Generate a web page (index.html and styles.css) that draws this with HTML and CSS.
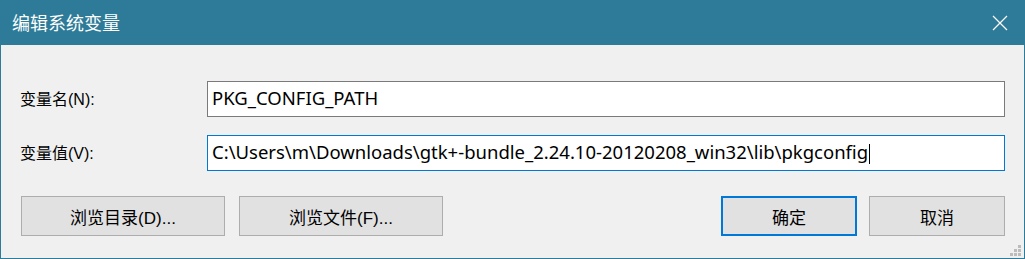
FILE: index.html
```html
<!DOCTYPE html>
<html>
<head>
  <title>编辑系统变量</title>
  <meta charset="utf-8">
  <link rel="stylesheet" href="styles.css">
</head>
<body>
  <div class="window">
    <div class="titlebar">
      <div class="title">编辑系统变量</div>
      <div class="close">
        <svg width="16" height="16" viewBox="0 0 16 16">
          <path d="M1 1 L15 15 M15 1 L1 15" stroke="#ffffff" stroke-width="1.2" fill="none"/>
        </svg>
      </div>
    </div>

    <div class="content">
      <div class="fields">
        <label class="field-label">变量名(N):</label>
        <div class="field-input">PKG_CONFIG_PATH</div>
        <label class="field-label">变量值(V):</label>
        <div class="field-input focused">C:\Users\m\Downloads\gtk+-bundle_2.24.10-20120208_win32\lib\pkgconfig<span class="caret"></span></div>
      </div>

      <div class="actions">
        <div class="action-group">
          <button class="btn wide">浏览目录(D)...</button>
          <button class="btn wide">浏览文件(F)...</button>
        </div>
        <div class="action-group right">
          <button class="btn narrow default">确定</button>
          <button class="btn narrow">取消</button>
        </div>
      </div>
    </div>

    <div class="grip">
      <span></span><span></span><span></span>
      <span></span><span></span><span></span>
    </div>
  </div>
</body>
</html>
```

FILE: styles.css
```css
* {
  margin: 0;
  padding: 0;
  box-sizing: border-box;
}

body {
  width: 1025px;
  height: 259px;
  overflow: hidden;
  font-family: "Liberation Sans", "Noto Sans CJK SC", sans-serif;
  background: #f0f0f0;
  color: #000000;
}

.window {
  position: relative;
  width: 1025px;
  height: 259px;
  background: #f0f0f0;
  border-left: 1px solid #2d7b98;
  border-right: 1px solid #2d7b98;
  border-bottom: 1px solid #2d7b98;
}

.titlebar {
  height: 45px;
  background: #2d7b98;
  display: flex;
  align-items: center;
  justify-content: space-between;
  margin-left: -1px;
  margin-right: -1px;
}

.title {
  padding-left: 12px;
  padding-bottom: 2px;
  font-family: "Noto Sans CJK SC", sans-serif;
  font-size: 18px;
  color: #ffffff;
}

.close {
  width: 46px;
  height: 45px;
  display: flex;
  align-items: center;
  justify-content: center;
  margin-right: 2px;
}

.content {
  padding: 36px 19px 0 19px;
}

.fields {
  display: grid;
  grid-template-columns: 187px 1fr;
  row-gap: 18px;
  align-items: center;
}

.field-label {
  font-size: 16px;
  padding-bottom: 2px;
}

.field-input {
  height: 36px;
  background: #ffffff;
  border: 1px solid #7a7a7a;
  padding: 0 4px;
  font-family: "Noto Sans", "Noto Sans CJK SC", sans-serif;
  font-size: 18.5px;
  line-height: 31px;
  white-space: nowrap;
  overflow: hidden;
}

.field-input.focused {
  border-color: #0078d7;
}

.caret {
  display: inline-block;
  width: 1px;
  height: 20px;
  background: #000000;
  vertical-align: -5px;
  margin-left: 1px;
}

.actions {
  display: flex;
  justify-content: space-between;
  margin-top: 25px;
  padding-left: 1px;
}

.action-group {
  display: flex;
  gap: 14px;
}

.action-group.right {
  gap: 12px;
}

.btn {
  height: 40px;
  background: #e1e1e1;
  border: 1px solid #adadad;
  font-family: "Liberation Sans", "Noto Sans CJK SC", sans-serif;
  font-size: 17px;
  color: #000000;
}

.btn.wide {
  width: 204px;
}

.btn.narrow {
  width: 136px;
}

.btn.default {
  border: 2px solid #0078d7;
}

/* resize grip in the corner */
.grip {
  position: absolute;
  right: 3px;
  bottom: 2px;
  width: 11px;
  height: 11px;
}

.grip span {
  position: absolute;
  width: 3px;
  height: 3px;
  background: #bcbcbc;
}

.grip span:nth-child(1) { right: 0; top: 0; }
.grip span:nth-child(2) { right: 0; top: 4px; }
.grip span:nth-child(3) { right: 4px; top: 4px; }
.grip span:nth-child(4) { right: 0; top: 8px; }
.grip span:nth-child(5) { right: 4px; top: 8px; }
.grip span:nth-child(6) { right: 8px; top: 8px; }
```
